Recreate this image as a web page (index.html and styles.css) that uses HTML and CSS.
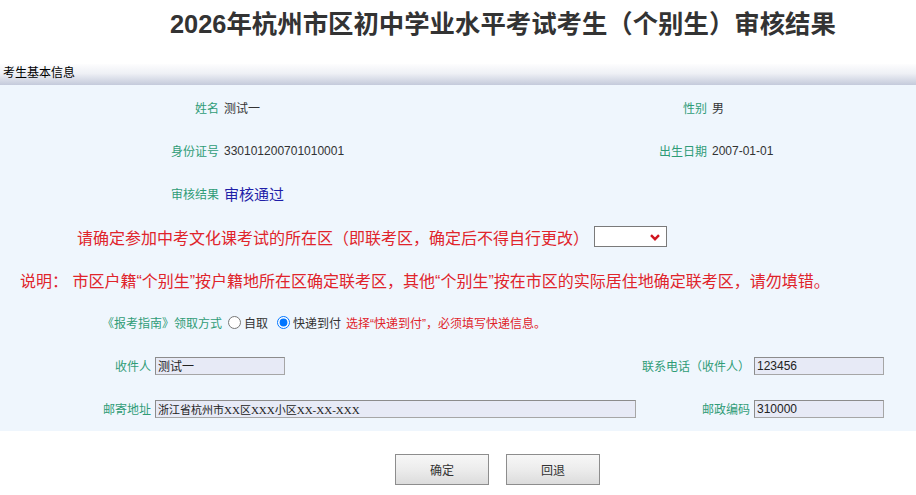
FILE: index.html
```html
<!DOCTYPE html>
<html lang="zh-CN">
<head>
<meta charset="utf-8">
<title>审核结果</title>
<link rel="stylesheet" href="styles.css">
</head>
<body>
<h1 class="title">2026年杭州市区初中学业水平考试考生（个别生）审核结果</h1>
<div class="section-bar">考生基本信息</div>
<div class="panel">
  <div class="info-row">
    <div class="lbl">姓名</div><div class="val">测试一</div>
    <div class="lbl">性别</div><div class="val">男</div>
  </div>
  <div class="info-row">
    <div class="lbl">身份证号</div><div class="val">330101200701010001</div>
    <div class="lbl">出生日期</div><div class="val">2007-01-01</div>
  </div>
  <div class="info-row">
    <div class="lbl">审核结果</div><div class="val pass">审核通过</div>
  </div>
  <div class="line-row district">
    <span class="warn">请确定参加中考文化课考试的所在区（即联考区，确定后不得自行更改）</span>
    <span class="select-wrap">
      <select class="district-select"><option></option></select>
      <svg class="chev" width="10" height="7" viewBox="0 0 10 7"><path d="M1 1.2 L5 5.2 L9 1.2" fill="none" stroke="#d0141e" stroke-width="2.4"/></svg>
    </span>
  </div>
  <div class="line-row note">
    <span class="warn">说明： 市区户籍“个别生”按户籍地所在区确定联考区，其他“个别生”按在市区的实际居住地确定联考区，请勿填错。</span>
  </div>
  <div class="line-row pick">
    <span class="lbl-inline">《报考指南》领取方式</span>
    <input type="radio" name="pick" class="radio r1" id="r1"><label for="r1" class="opt">自取</label>
    <input type="radio" name="pick" class="radio r2" id="r2" checked><label for="r2" class="opt">快递到付</label>
    <span class="hint">选择“快递到付”，必须填写快递信息。</span>
  </div>
  <div class="mail-row">
    <div class="lbl">收件人</div>
    <div class="fld"><input class="txt short" value="测试一"></div>
    <div class="lbl">联系电话（收件人）</div>
    <div class="fld"><input class="txt short" value="123456"></div>
  </div>
  <div class="mail-row">
    <div class="lbl">邮寄地址</div>
    <div class="fld"><input class="txt long serif" value="浙江省杭州市XX区XXX小区XX-XX-XXX"></div>
    <div class="lbl">邮政编码</div>
    <div class="fld"><input class="txt short" value="310000"></div>
  </div>
</div>
<div class="actions">
  <button class="btn">确定</button>
  <button class="btn">回退</button>
</div>
</body>
</html>
```
FILE: styles.css
```css
html, body {
  margin: 0;
  padding: 0;
  background: #ffffff;
}
body {
  font-family: "Liberation Sans", "Noto Sans CJK SC", sans-serif;
  font-size: 12px;
  color: #333333;
  width: 916px;
  height: 495px;
  overflow: hidden;
}
.title {
  margin: 0 0 16px 0;
  padding-left: 170px;
  height: 48px;
  line-height: 48px;
  font-size: 25.4px;
  font-weight: bold;
  color: #333333;
  white-space: nowrap;
}
.section-bar {
  height: 21px;
  line-height: 19px;
  padding-left: 3px;
  color: #000000;
  font-size: 12px;
  background: linear-gradient(to bottom, #fdfdfe 0%, #eef0f5 45%, #c4cadb 100%);
}
.panel {
  background: #eff6fd;
  padding-top: 1px;
  height: 346px;
  box-sizing: border-box;
}
.info-row {
  display: grid;
  grid-template-columns: 219px 269px 219px 1fr;
  align-items: center;
  height: 43px;
}
.lbl {
  text-align: right;
  color: #2f9c77;
  white-space: nowrap;
}
.val {
  padding-left: 5px;
  color: #333333;
}
.val.pass {
  color: #1f1fa8;
  font-size: 15px;
}
.line-row {
  display: flex;
  align-items: center;
  height: 43px;
  white-space: nowrap;
}
.warn {
  color: #e0242b;
  font-size: 16px;
}
.district {
  padding-left: 77px;
}
.select-wrap {
  position: relative;
  margin-left: 5px;
  display: inline-block;
  width: 73px;
  height: 21px;
}
.district-select {
  appearance: none;
  -webkit-appearance: none;
  width: 73px;
  height: 21px;
  margin: 0;
  border: 1px solid #7a7a7a;
  border-radius: 0;
  background: #ffffff;
  box-sizing: border-box;
}
.chev {
  position: absolute;
  right: 7px;
  top: 8px;
  pointer-events: none;
}
.note {
  padding-left: 20px;
}
.pick {
  padding-left: 102px;
}
.lbl-inline {
  color: #2f9c77;
}
.radio {
  width: 13px;
  height: 13px;
  margin: 0;
}
.r1 {
  margin-left: 6px;
  margin-right: 3px;
}
.r2 {
  margin-left: 9px;
  margin-right: 3px;
}
.opt {
  color: #333333;
}
.hint {
  margin-left: 5px;
  color: #e0242b;
  font-size: 12px;
}
.mail-row {
  display: grid;
  grid-template-columns: 151px 489px 110px 1fr;
  align-items: center;
  height: 43px;
}
.fld {
  padding-left: 4px;
  display: flex;
  align-items: center;
}
.txt {
  height: 18px;
  box-sizing: border-box;
  margin: 0;
  padding: 0 2px;
  border: 1px solid #a6a6a6;
  border-top-color: #8c8c8c;
  border-left-color: #8c8c8c;
  background: #e7eaf6;
  font-family: "Liberation Sans", "Noto Sans CJK SC", sans-serif;
  font-size: 12px;
  color: #222222;
}
.txt.short {
  width: 130px;
}
.txt.long {
  width: 481px;
}
.txt.serif {
  font-family: "Liberation Serif", "Noto Sans CJK SC", serif;
  font-size: 11px;
}
.actions {
  display: flex;
  gap: 17px;
  padding-left: 395px;
  margin-top: 23px;
}
.btn {
  width: 94px;
  height: 31px;
  margin: 0;
  border: 1px solid #8d8d8d;
  border-radius: 0;
  background: linear-gradient(to bottom, #f7f7f7 0%, #ececec 50%, #dcdcdc 100%);
  font-family: "Liberation Sans", "Noto Sans CJK SC", sans-serif;
  font-size: 12px;
  color: #333333;
}
```
